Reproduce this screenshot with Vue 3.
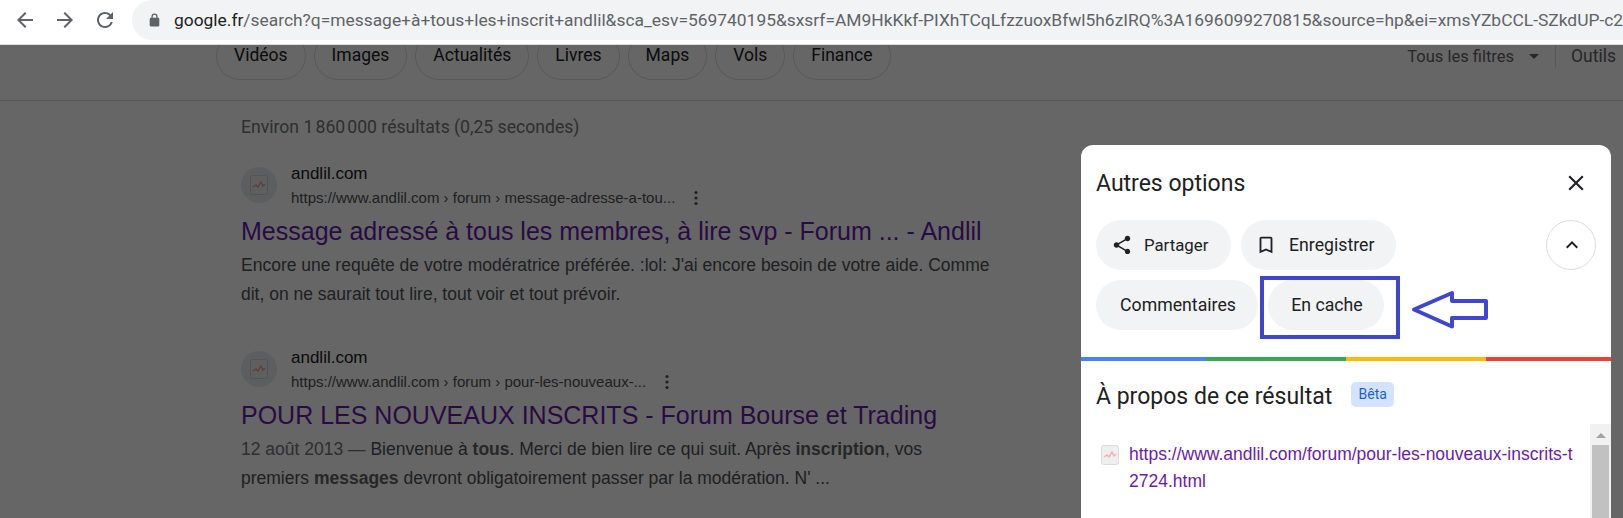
<template>
  <div class="page">
    <header class="toolbar">
      <button class="nav" aria-label="Retour">
        <svg viewBox="0 0 24 24"><path d="M20 11H7.83l5.59-5.59L12 4l-8 8 8 8 1.41-1.41L7.83 13H20v-2z" /></svg>
      </button>
      <button class="nav" aria-label="Suivant">
        <svg viewBox="0 0 24 24"><path d="M12 4l-1.41 1.41L16.17 11H4v2h12.17l-5.58 5.59L12 20l8-8z" /></svg>
      </button>
      <button class="nav" aria-label="Actualiser">
        <svg viewBox="0 0 24 24"><path d="M17.65 6.35A7.958 7.958 0 0 0 12 4c-4.42 0-7.99 3.58-7.99 8s3.57 8 7.99 8c3.73 0 6.84-2.55 7.73-6h-2.08A5.99 5.99 0 0 1 12 18c-3.31 0-6-2.69-6-6s2.69-6 6-6c1.66 0 3.14.69 4.22 1.78L13 11h7V4l-2.35 2.35z" /></svg>
      </button>
      <div class="omnibox">
        <svg class="lock" viewBox="0 0 12 16"><path d="M10 5.5H9.5V4a3.5 3.5 0 0 0-7 0v1.500H2A1.500 1.500 0 0 0 .5 7v7A1.500 1.500 0 0 0 2 15.500h8a1.500 1.500 0 0 0 1.500-1.500V7A1.500 1.500 0 0 0 10 5.500zM4 5.500V4a2 2 0 0 1 4 0v1.500H4z" /></svg>
        <span class="url"><b>google.fr</b>{{ urlPath }}</span>
      </div>
    </header>

    <nav class="tabs">
      <div class="chip" v-for="t in tabs" :key="t">{{ t }}</div>
      <div class="tools">
        <span class="filters">Tous les filtres <i class="caret"></i></span>
        <span class="outils">Outils</span>
      </div>
    </nav>

    <main class="results">
      <p class="stats">Environ 1&#8239;860&#8239;000 résultats (0,25 secondes)</p>

      <article class="result" v-for="r in results" :key="r.title">
        <div class="source">
          <div class="fav-circle">
            <svg class="favicon" viewBox="0 0 18 20">
              <rect x="0.500" y="0.500" width="17" height="19" rx="2" fill="#eeeeee" stroke="#cfcfcf" />
              <path d="M3 12l3-2 2 2 3-5 2 4 2-2" fill="none" stroke="#eba3a3" stroke-width="1.500" />
            </svg>
          </div>
          <div class="source-text">
            <div class="site">andlil.com</div>
            <div class="crumb">
              <span>https://www.andlil.com › forum › {{ r.slug }}</span>
              <svg class="dots" viewBox="0 0 4 16"><circle cx="2" cy="2.500" r="1.600" /><circle cx="2" cy="8" r="1.600" /><circle cx="2" cy="13.500" r="1.600" /></svg>
            </div>
          </div>
        </div>
        <h3 class="title">{{ r.title }}</h3>
        <p class="snippet" v-html="r.snippet"></p>
      </article>
    </main>

    <div class="scrim"></div>

    <aside class="panel">
      <div class="panel-head">
        <h2>Autres options</h2>
        <svg class="close" viewBox="0 0 24 24"><path d="M19 6.410L17.590 5 12 10.590 6.410 5 5 6.410 10.590 12 5 17.590 6.410 19 12 13.410 17.590 19 19 17.590 13.410 12z" /></svg>
      </div>

      <div class="actions">
        <div class="pills">
          <button class="pill share">
            <svg viewBox="0 0 24 24"><path d="M18 16.080c-.76 0-1.440.3-1.960.77L8.910 12.700c.05-.23.09-.46.09-.7s-.04-.47-.09-.7l7.050-4.110c.54.5 1.250.81 2.040.81 1.660 0 3-1.340 3-3s-1.340-3-3-3-3 1.340-3 3c0 .24.04.47.09.7L8.040 9.810C7.500 9.310 6.790 9 6 9c-1.660 0-3 1.340-3 3s1.340 3 3 3c.79 0 1.500-.31 2.040-.81l7.120 4.160c-.05.21-.08.43-.08.65 0 1.610 1.310 2.920 2.920 2.920s2.920-1.310 2.920-2.920-1.310-2.920-2.920-2.920z" /></svg>
            Partager
          </button>
          <button class="pill save">
            <svg viewBox="0 0 24 24"><path d="M17 3H7c-1.100 0-2 .9-2 2v16l7-3 7 3V5c0-1.100-.9-2-2-2zm0 15l-5-2.180L7 18V5h10v13z" /></svg>
            Enregistrer
          </button>
          <button class="pill comments">Commentaires</button>
          <button class="pill cache">En cache</button>
        </div>
        <button class="more" aria-label="Réduire">
          <svg viewBox="0 0 24 24"><path d="M12 8l-6 6 1.410 1.410L12 10.830l4.590 4.580L18 14z" /></svg>
        </button>
      </div>

      <div class="rainbow"><i class="c1"></i><i class="c2"></i><i class="c3"></i><i class="c4"></i></div>

      <div class="about">
        <h2>À propos de ce résultat</h2>
        <span class="beta">Bêta</span>
      </div>

      <div class="about-body">
        <div class="link-row">
          <svg class="favicon small" viewBox="0 0 18 20">
            <rect x="0.500" y="0.500" width="17" height="19" rx="2" fill="#eeeeee" stroke="#dcdcdc" />
            <path d="M3 12l3-2 2 2 3-5 2 4 2-2" fill="none" stroke="#f0b4b4" stroke-width="1.500" />
          </svg>
          <a class="link">https://www.andlil.com/forum/pour-les-nouveaux-inscrits-t2724.html</a>
        </div>
        <div class="scrollbar">
          <i class="up"></i>
          <div class="thumb"></div>
        </div>
      </div>
    </aside>

    <div class="mark"></div>
    <svg class="arrow" viewBox="0 0 78 40">
      <path d="M3 19.500L41 3v8h34v17H41v8.500z" fill="#fff" stroke="#3f48cc" stroke-width="4" stroke-linejoin="round" />
    </svg>
  </div>
</template>

<script setup>
const urlPath = '/search?q=message+à+tous+les+inscrit+andlil&sca_esv=569740195&sxsrf=AM9HkKkf-PIXhTCqLfzzuoxBfwl5h6zIRQ%3A1696099270815&source=hp&ei=xmsYZbCCL-SZkdUP-c2QwAQ'

const tabs = ['Vidéos', 'Images', 'Actualités', 'Livres', 'Maps', 'Vols', 'Finance']

const results = [
  {
    slug: 'message-adresse-a-tou...',
    title: 'Message adressé à tous les membres, à lire svp - Forum ... - Andlil',
    snippet: "Encore une requête de votre modératrice préférée. :lol: J'ai encore besoin de votre aide. Comme dit, on ne saurait tout lire, tout voir et tout prévoir."
  },
  {
    slug: 'pour-les-nouveaux-...',
    title: 'POUR LES NOUVEAUX INSCRITS - Forum Bourse et Trading',
    snippet: "<span class='date'>12 août 2013 — </span>Bienvenue à <b>tous</b>. Merci de bien lire ce qui suit. Après <b>inscription</b>, vos premiers <b>messages</b> devront obligatoirement passer par la modération. N' ..."
  }
]
</script>

<style>
html, body { margin: 0; overflow: hidden; }
</style>

<style scoped>
.page {
  position: relative;
  width: 1623px;
  height: 518px;
  overflow: hidden;
  background: #fff;
  font-family: "Liberation Sans", Arial, sans-serif;
}

.toolbar {
  position: relative;
  z-index: 3;
  display: flex;
  align-items: flex-start;
  height: 44px;
  padding-left: 5px;
  background: #fff;
  border-bottom: 1px solid #dadce0;
}
.nav {
  width: 40px;
  height: 40px;
  padding: 0;
  margin: 0;
  border: 0;
  background: none;
  display: flex;
  align-items: center;
  justify-content: center;
}
.nav svg { width: 24px; height: 24px; fill: #5f6368; }
.omnibox {
  flex: 1;
  min-width: 0;
  margin-left: 7px;
  height: 40px;
  display: flex;
  align-items: center;
  padding-left: 17px;
  border-radius: 20px 0 0 20px;
  background: #f1f3f4;
}
.lock { width: 11px; height: 14px; fill: #5f6368; flex: none; margin-right: 14px; }
.url {
  font-family: Roboto, sans-serif;
  font-size: 17.4px;
  color: #5f6368;
  white-space: nowrap;
  overflow: hidden;
}
.url b { font-weight: 400; color: #202124; }

.tabs {
  display: flex;
  align-items: flex-start;
  gap: 8px;
  height: 55px;
  padding-left: 216px;
  border-bottom: 1px solid #dadce0;
  font-family: Roboto, sans-serif;
}
.chip {
  height: 48px;
  margin-top: -13px;
  padding: 0 17px 2px;
  display: flex;
  align-items: center;
  box-sizing: border-box;
  border: 1px solid #dadce0;
  border-radius: 24px;
  font-size: 17.5px;
  color: #202124;
}
.tools {
  margin-left: auto;
  display: flex;
  align-items: center;
  height: 22px;
  color: #5f6368;
}
.filters { display: flex; align-items: center; gap: 15px; padding-right: 16px; border-right: 1px solid #dadce0; height: 24px; font-size: 16.5px; }
.caret { width: 0; height: 0; border: 5px solid transparent; border-top-color: #5f6368; border-bottom: 0; }
.outils { padding-left: 15px; padding-right: 7px; white-space: nowrap; font-size: 17.5px; }

.results { padding: 0 0 0 241px; }
.stats {
  margin: 16px 0 0;
  font-family: Roboto, sans-serif;
  font-size: 17.6px;
  line-height: 20px;
  color: #70757a;
}
.result { margin-top: 26px; width: 750px; }
.result + .result { margin-top: 39px; }
.source { display: flex; align-items: center; gap: 14px; height: 44px; }
.fav-circle {
  width: 36px;
  height: 36px;
  border-radius: 50%;
  background: #e8eaed;
  display: flex;
  align-items: center;
  justify-content: center;
  flex: none;
}
.favicon { width: 18px; height: 20px; }
.site { font-size: 17px; line-height: 20px; color: #202124; }
.crumb {
  display: flex;
  align-items: center;
  gap: 19px;
  margin-top: 5px;
  font-size: 15px;
  line-height: 18px;
  color: #4d5156;
}
.dots { width: 4px; height: 16px; fill: #4d5156; }
.title {
  margin: 9px 0 0;
  font-size: 25px;
  line-height: 30px;
  font-weight: 400;
  color: #681da8;
  white-space: nowrap;
}
.snippet {
  margin: 5px 0 0;
  font-size: 17.5px;
  line-height: 28.5px;
  color: #4d5156;
}
.snippet :deep(b) { color: #5f6368; }
.snippet :deep(.date) { color: #70757a; }

.scrim {
  position: absolute;
  z-index: 2;
  left: 0;
  right: 0;
  top: 45px;
  bottom: 0;
  background: rgba(0, 0, 0, 0.6);
}

.panel {
  position: absolute;
  z-index: 4;
  left: 1081px;
  top: 145px;
  width: 530px;
  height: 373px;
  background: #fff;
  border-radius: 12px 12px 0 0;
  font-family: Roboto, sans-serif;
  color: #202124;
  display: flex;
  flex-direction: column;
}
.panel h2 { margin: 0; font-size: 23px; font-weight: 400; }
.panel-head {
  height: 75px;
  padding: 2px 22px 0 15px;
  display: flex;
  align-items: center;
  justify-content: space-between;
  box-sizing: border-box;
}
.close { width: 26px; height: 26px; fill: #202124; margin-top: -2px; }
.actions {
  display: flex;
  justify-content: space-between;
  align-items: flex-start;
  padding: 0 15px;
  height: 137px;
}
.pills { display: flex; flex-wrap: wrap; gap: 10px; width: 330px; }
.pill {
  height: 50px;
  padding: 0;
  border: 0;
  border-radius: 25px;
  background: #f1f3f4;
  color: #202124;
  font-family: inherit;
  font-size: 17.7px;
  display: flex;
  align-items: center;
  justify-content: center;
}
.pill svg { width: 22px; height: 22px; fill: #202124; }
.share { width: 135px; justify-content: flex-start; padding-left: 15px; gap: 11px; font-size: 16.8px; }
.save { width: 155px; justify-content: flex-start; padding-left: 14px; gap: 12px; }
.comments { width: 162px; padding-left: 2px; }
.cache { width: 116px; padding-left: 2px; }
.more {
  width: 50px;
  height: 50px;
  padding: 0 0 0 2px;
  border: 1px solid #dadce0;
  border-radius: 50%;
  background: #fff;
  display: flex;
  align-items: center;
  justify-content: center;
}
.more svg { width: 24px; height: 24px; fill: #202124; }

.rainbow { display: flex; height: 4px; flex: none; }
.rainbow i { display: block; }
.c1 { width: 125px; background: #4285f4; }
.c2 { width: 140px; background: #34a853; }
.c3 { width: 140px; background: #fbbc04; }
.c4 { width: 125px; background: #ea4335; }

.about {
  display: flex;
  align-items: center;
  gap: 19px;
  padding: 4px 15px 0;
  height: 63px;
  box-sizing: border-box;
  flex: none;
}
.about h2 { margin-top: 4px; }
.beta {
  width: 43px;
  height: 25px;
  line-height: 25px;
  text-align: center;
  border-radius: 5px;
  background: #d3e3fd;
  color: #1a5fd6;
  font-size: 14px;
}

.about-body { flex: 1; display: flex; min-height: 0; }
.link-row {
  flex: 1;
  display: flex;
  gap: 10px;
  padding: 17px 0 0 20px;
}
.favicon.small { flex: none; margin-top: 4px; }
.link {
  width: 450px;
  font-family: "Liberation Sans", Arial, sans-serif;
  font-size: 17.5px;
  line-height: 27px;
  color: #681da8;
  word-break: break-all;
}
.scrollbar {
  width: 21px;
  background: #f1f1f1;
}
.up {
  display: block;
  margin: 9px 0 0 6px;
  width: 0;
  height: 0;
  border: 5px solid transparent;
  border-bottom: 5px solid #a3a3a3;
  border-top: 0;
}
.thumb { margin: 7px 0 0 2px; width: 17px; height: 80px; background: #c1c1c1; }

.mark {
  position: absolute;
  z-index: 5;
  left: 1260px;
  top: 276px;
  width: 140px;
  height: 63px;
  box-sizing: border-box;
  border: 4px solid #3f48cc;
}
.arrow {
  position: absolute;
  z-index: 5;
  left: 1411px;
  top: 290px;
  width: 78px;
  height: 40px;
}
</style>
